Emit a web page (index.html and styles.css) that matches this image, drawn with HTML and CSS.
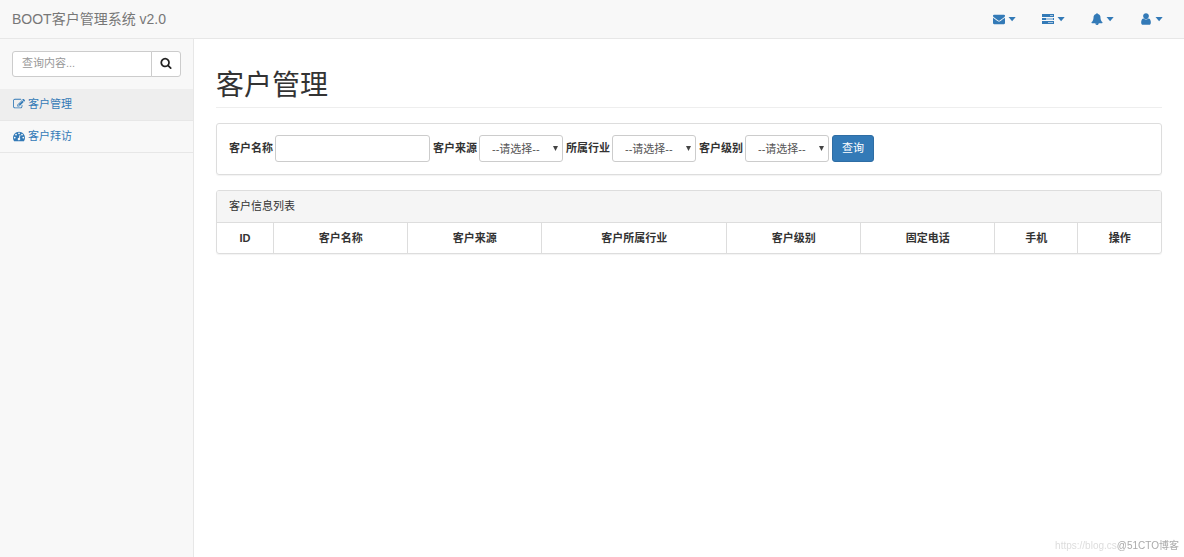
FILE: index.html
```html
<!DOCTYPE html>
<html lang="zh-CN">
<head>
<meta charset="utf-8">
<title>客户管理 - BOOT客户管理系统</title>
<link rel="stylesheet" href="styles.css">
</head>
<body>
<svg class="sprite" aria-hidden="true">
  <symbol id="caret" viewBox="0 0 8 12"><path d="M0.500 4h7.200l-3.600 4.200z"/></symbol>
</svg>
<header class="navbar">
  <a class="brand" href="#">BOOT客户管理系统 v2.0</a>
  <nav class="top-links">
    <a href="#" aria-label="消息">
      <svg class="icon" viewBox="0 0 1792 1792"><path d="M1792 710v794q0 66-47 113t-113 47h-1472q-66 0-113-47t-47-113v-794q44 49 101 87 362 246 497 345 57 42 92.5 65.5t94.500 48 110 24.500h2q51 0 110-24.500t94.500-48 92.500-65.500q170-123 498-345 57-39 100-87zm0-294q0 79-49 151t-122 123q-376 261-468 325-10 7-42.500 31t-54 38.500-52 32.500-57.500 27-50 9h-2q-23 0-50-9t-57.500-27-52-32.500-54-38.500-42.500-31q-91-64-262-182.500t-205-142.500q-62-42-117-115.500t-55-136.500q0-78 41.500-130t118.500-52h1472q65 0 112.500 47t47.500 113z"/></svg>
      <svg class="caret"><use href="#caret"/></svg>
    </a>
    <a href="#" aria-label="任务">
      <svg class="icon" viewBox="0 0 12 12"><path d="M0 1h12v3H0zM0 5h12v2H0zM0 8h12v3H0z"/><path class="tint" d="M8 2h3v1H8zM4 5h7v2H4zM6 9h5v1H6z"/></svg>
      <svg class="caret"><use href="#caret"/></svg>
    </a>
    <a href="#" aria-label="通知">
      <svg class="icon" viewBox="0 0 1792 1792"><path d="M912 1696q0-16-16-16-59 0-101.500-42.500t-42.500-101.500q0-16-16-16t-16 16q0 73 51.500 124.500t124.500 51.500q16 0 16-16zm816-288q0 52-38 90t-90 38h-448q0 106-75 181t-181 75-181-75-75-181h-448q-52 0-90-38t-38-90q50-42 91-88t85-119.500 74.500-158.500 50-206 19.500-260q0-152 117-282.500t307-158.500q-8-19-8-39 0-40 28-68t68-28 68 28 28 68q0 20-8 39 190 28 307 158.500t117 282.500q0 139 19.500 260t50 206 74.500 158.500 85 119.500 91 88z"/></svg>
      <svg class="caret"><use href="#caret"/></svg>
    </a>
    <a href="#" aria-label="用户">
      <svg class="icon" viewBox="100 100 1592 1592"><path d="M1536 1399q0 109-62.500 187t-150.500 78h-854q-88 0-150.500-78t-62.500-187q0-85 8.500-160.500t31.500-152 58.500-131 94-89 134.500-34.500q131 128 313 128t313-128q76 0 134.500 34.500t94 89 58.500 131 31.500 152 8.500 160.500zm-256-887q0 159-112.500 271.500t-271.500 112.500-271.500-112.500-112.500-271.500 112.500-271.500 271.500-112.500 271.500 112.500 112.500 271.500z"/></svg>
      <svg class="caret"><use href="#caret"/></svg>
    </a>
  </nav>
</header>
<div class="layout">
  <aside class="sidebar">
    <form class="search">
      <input type="text" placeholder="查询内容..." aria-label="查询内容">
      <button type="button" aria-label="搜索">
        <svg class="icon" viewBox="0 0 1792 1792"><path d="M1216 832q0-185-131.500-316.500t-316.500-131.500-316.500 131.500-131.500 316.500 131.500 316.500 316.500 131.500 316.500-131.500 131.500-316.500zm512 832q0 52-38 90t-90 38q-54 0-90-38l-343-342q-179 124-399 124-143 0-273.500-55.500t-225-150-150-225-55.500-273.500 55.500-273.500 150-225 225-150 273.500-55.500 273.500 55.500 225 150 150 225 55.500 273.500q0 220-124 399l343 343q37 37 37 90z"/></svg>
      </button>
    </form>
    <nav class="menu">
      <a class="active" href="#">
        <svg class="icon" viewBox="0 0 1792 1792"><path d="M888 1184l116-116-152-152-116 116v56h96v96h56zm440-720q-16-16-33 1l-350 350q-17 17-1 33t33-1l350-350q17-17 1-33zm80 594v190q0 119-84.500 203.500t-203.500 84.500h-832q-119 0-203.500-84.500t-84.500-203.500v-832q0-119 84.500-203.500t203.500-84.500h832q63 0 117 25 15 7 18 23 3 17-9 29l-49 49q-14 14-32 8-23-6-45-6h-832q-66 0-113 47t-47 113v832q0 66 47 113t113 47h832q66 0 113-47t47-113v-126q0-13 9-22l64-64q15-15 35-7t20 29zm-96-738l288 288-672 672h-288v-288zm444 132l-92 92-288-288 92-92q28-28 68-28t68 28l152 152q28 28 28 68t-28 68z"/></svg>
        客户管理
      </a>
      <a href="#">
        <svg class="icon" viewBox="0 0 1792 1792"><path d="M384 1152q0-53-37.500-90.500t-90.500-37.500-90.500 37.500-37.500 90.500 37.500 90.500 90.500 37.500 90.500-37.500 37.500-90.500zm192-448q0-53-37.500-90.500t-90.500-37.500-90.500 37.500-37.500 90.500 37.500 90.500 90.500 37.500 90.500-37.500 37.500-90.500zm428 481l101-382q6-26-7.500-48.500t-38.500-29.500-48 6.500-30 39.500l-101 382q-60 5-107 43.500t-63 98.500q-20 77 20 146t117 89 146-20 89-117q16-60-6-117t-72-91zm660-33q0-53-37.500-90.500t-90.500-37.500-90.500 37.500-37.500 90.500 37.500 90.500 90.500 37.500 90.500-37.500 37.500-90.500zm-640-640q0-53-37.500-90.500t-90.500-37.500-90.500 37.500-37.500 90.500 37.500 90.500 90.500 37.500 90.500-37.500 37.500-90.500zm448 192q0-53-37.500-90.500t-90.500-37.500-90.500 37.500-37.500 90.500 37.500 90.500 90.500 37.500 90.500-37.500 37.500-90.500zm320 448q0 261-141 483-19 29-54 29h-1402q-35 0-54-29-141-221-141-483 0-182 71-348t191-286 286-191 348-71 348 71 286 191 191 286 71 348z"/></svg>
        客户拜访
      </a>
    </nav>
  </aside>
  <main class="content">
    <h1>客户管理</h1>
    <form class="panel filters">
      <label for="name">客户名称</label>
      <input id="name" type="text">
      <label for="source">客户来源</label>
      <span class="select"><select id="source"><option>--请选择--</option></select></span>
      <label for="industry">所属行业</label>
      <span class="select"><select id="industry"><option>--请选择--</option></select></span>
      <label for="level">客户级别</label>
      <span class="select"><select id="level"><option>--请选择--</option></select></span>
      <button type="button">查询</button>
    </form>
    <section class="panel list">
      <div class="panel-heading">客户信息列表</div>
      <table>
        <colgroup><col class="w-id"><col class="w-mid"><col class="w-mid"><col class="w-wide"><col class="w-mid"><col class="w-mid"><col class="w-small"><col class="w-small"></colgroup>
        <thead>
          <tr><th>ID</th><th>客户名称</th><th>客户来源</th><th>客户所属行业</th><th>客户级别</th><th>固定电话</th><th>手机</th><th>操作</th></tr>
        </thead>
      </table>
    </section>
  </main>
</div>
<div class="watermark"><span class="url">https://blog.cs</span><span class="owner">@51CTO博客</span></div>
</body>
</html>
```
FILE: styles.css
```css
* { box-sizing: border-box; }

body {
  display: flex;
  flex-direction: column;
  min-height: 100vh;
  margin: 0;
  background: #f8f8f8;
  color: #333;
  font: 11px/16px "Liberation Sans", "Noto Sans CJK SC", sans-serif;
}

a { color: #337ab7; text-decoration: none; }
input, select, button { font: inherit; }

.sprite { position: absolute; width: 0; height: 0; }
.icon { width: 12px; height: 12px; fill: currentColor; }
.icon .tint { fill: #a9c6e0; }
.caret { width: 8px; height: 12px; fill: currentColor; }

.navbar {
  display: flex;
  justify-content: space-between;
  align-items: center;
  height: 39px;
  padding: 0 21px 1px 12px;
  border-bottom: 1px solid #e7e7e7;
}
.brand { color: #777; font-size: 14px; }
.top-links { display: flex; gap: 26px; }
.top-links a { display: flex; align-items: center; gap: 3px; }

.layout { display: flex; flex: 1; }

.sidebar { width: 193px; }
.search { display: flex; padding: 12px; }
.search input {
  flex: 1;
  min-width: 0;
  height: 26px;
  padding: 0 9px 2px;
  border: 1px solid #ccc;
  border-radius: 3px 0 0 3px;
  background: #fff;
}
.search input::placeholder { color: #999; }
.search button {
  display: flex;
  align-items: center;
  justify-content: center;
  width: 30px;
  margin-left: -1px;
  padding: 0 0 2px;
  border: 1px solid #ccc;
  border-radius: 0 3px 3px 0;
  background: #fff;
  color: #222;
}
.menu a {
  display: flex;
  align-items: center;
  gap: 3px;
  height: 32px;
  padding: 0 13px 2px;
  border-bottom: 1px solid #e7e7e7;
}
.menu .active { background: #eee; }

.content {
  flex: 1;
  min-width: 0;
  padding: 30px 22px 0;
  border-left: 1px solid #e7e7e7;
  background: #fff;
}
h1 {
  margin: 0 0 15px;
  padding-bottom: 5px;
  border-bottom: 1px solid #eee;
  font-size: 28px;
  line-height: 33px;
  font-weight: 400;
}

.panel {
  margin-bottom: 15px;
  border: 1px solid #ddd;
  border-radius: 3px;
  box-shadow: 0 1px 1px rgba(0, 0, 0, .05);
}
.filters {
  display: flex;
  flex-wrap: wrap;
  align-items: center;
  gap: 3px;
  padding: 11px 12px 12px;
}
.filters label {
  width: 43px;
  padding-bottom: 2px;
  font-weight: 700;
  white-space: nowrap;
}
.filters input, .filters select {
  height: 27px;
  border: 1px solid #ccc;
  border-radius: 3px;
  background: #fff;
  color: #555;
}
.filters input { width: 155px; padding: 0 9px; }
.select { position: relative; }
.select select {
  display: block;
  width: 84px;
  padding: 1px 12px 0;
  appearance: none;
}
.select::after {
  content: "";
  position: absolute;
  top: 11px;
  right: 5px;
  width: 5px;
  height: 5px;
  background: #444;
  clip-path: polygon(0 0, 100% 0, 50% 100%);
  pointer-events: none;
}
.filters button {
  height: 27px;
  padding: 0 9px 2px;
  border: 1px solid #2e6da4;
  border-radius: 3px;
  background: #337ab7;
  color: #fff;
}

.panel-heading {
  padding: 7px 12px 8px;
  border-bottom: 1px solid #ddd;
  background: #f5f5f5;
}
.list { overflow: hidden; }
table { width: 100%; border-collapse: collapse; table-layout: fixed; }
th { height: 30px; padding: 0 6px; text-align: center; }
th + th { border-left: 1px solid #ddd; }
.w-id { width: 6%; }
.w-mid { width: 14.2%; }
.w-wide { width: 19.6%; }
.w-small { width: 8.8%; }

.watermark {
  position: fixed;
  right: 5px;
  bottom: 3px;
  display: flex;
  font-size: 10px;
  line-height: 16px;
}
.watermark .url { color: #ddd; }
.watermark .owner { color: #aaa; }
```
